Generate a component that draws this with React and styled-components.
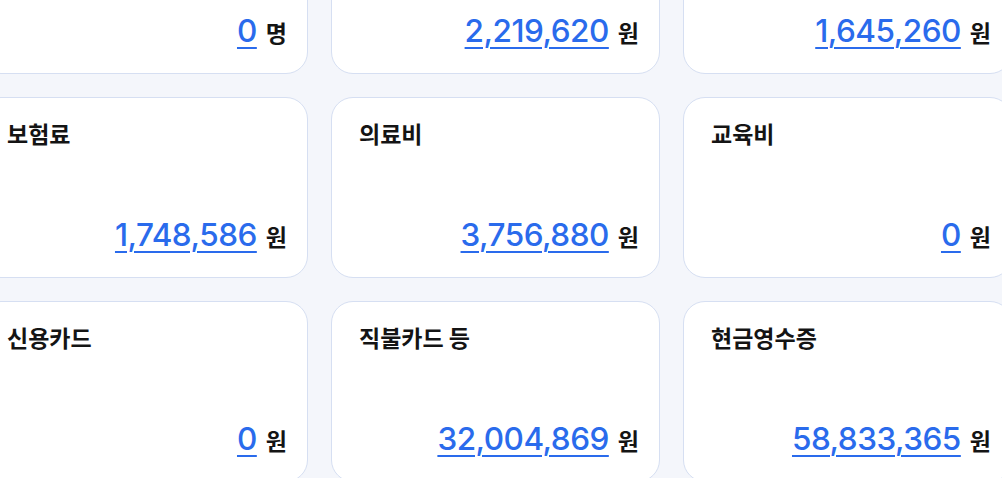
import React from 'react';
import styled, { createGlobalStyle } from 'styled-components';

const GlobalStyle = createGlobalStyle`
  html, body {
    margin: 0;
    padding: 0;
    background: #f4f6fb;
    overflow: hidden;
  }
  body {
    font-family: "Inter", "Noto Sans CJK KR", sans-serif;
  }
`;

const Viewport = styled.div`
  width: 1002px;
  height: 478px;
  overflow: hidden;
`;

const Grid = styled.div`
  display: grid;
  grid-template-columns: repeat(3, 329px);
  grid-auto-rows: 181px;
  gap: 23px;
  margin: -107px 0 0 -21px;
`;

const Card = styled.div`
  box-sizing: border-box;
  background: #ffffff;
  border: 1px solid #d6dff2;
  border-radius: 22px;
  padding: 20px 20px 21px 27px;
  display: flex;
  flex-direction: column;
  justify-content: space-between;
`;

const Title = styled.div`
  font-family: "Noto Sans CJK KR", sans-serif;
  font-size: 23px;
  font-weight: 600;
  color: #141414;
  line-height: 30px;
`;

const ValueRow = styled.div`
  display: flex;
  justify-content: flex-end;
  align-items: baseline;
  gap: 9px;
  line-height: 40px;
`;

const Amount = styled.a`
  font-family: "Inter", sans-serif;
  font-size: 31.5px;
  font-weight: 500;
  color: #2a6bec;
  letter-spacing: -0.5px;
  text-decoration: underline;
  text-decoration-thickness: 2px;
  text-underline-offset: 5px;
  cursor: pointer;
`;

const Unit = styled.span`
  font-family: "Noto Sans CJK KR", sans-serif;
  font-size: 23px;
  font-weight: 700;
  color: #141414;
`;

const items = [
  { title: '부양가족', value: '0', unit: '명' },
  { title: '국민연금', value: '2,219,620', unit: '원' },
  { title: '건강보험', value: '1,645,260', unit: '원' },
  { title: '보험료', value: '1,748,586', unit: '원' },
  { title: '의료비', value: '3,756,880', unit: '원' },
  { title: '교육비', value: '0', unit: '원' },
  { title: '신용카드', value: '0', unit: '원' },
  { title: '직불카드 등', value: '32,004,869', unit: '원' },
  { title: '현금영수증', value: '58,833,365', unit: '원' },
];

const App = () => (
  <Viewport>
    <GlobalStyle />
    <Grid>
      {items.map((item) => (
        <Card key={item.title}>
          <Title>{item.title}</Title>
          <ValueRow>
            <Amount>{item.value}</Amount>
            <Unit>{item.unit}</Unit>
          </ValueRow>
        </Card>
      ))}
    </Grid>
  </Viewport>
);

export default App;
